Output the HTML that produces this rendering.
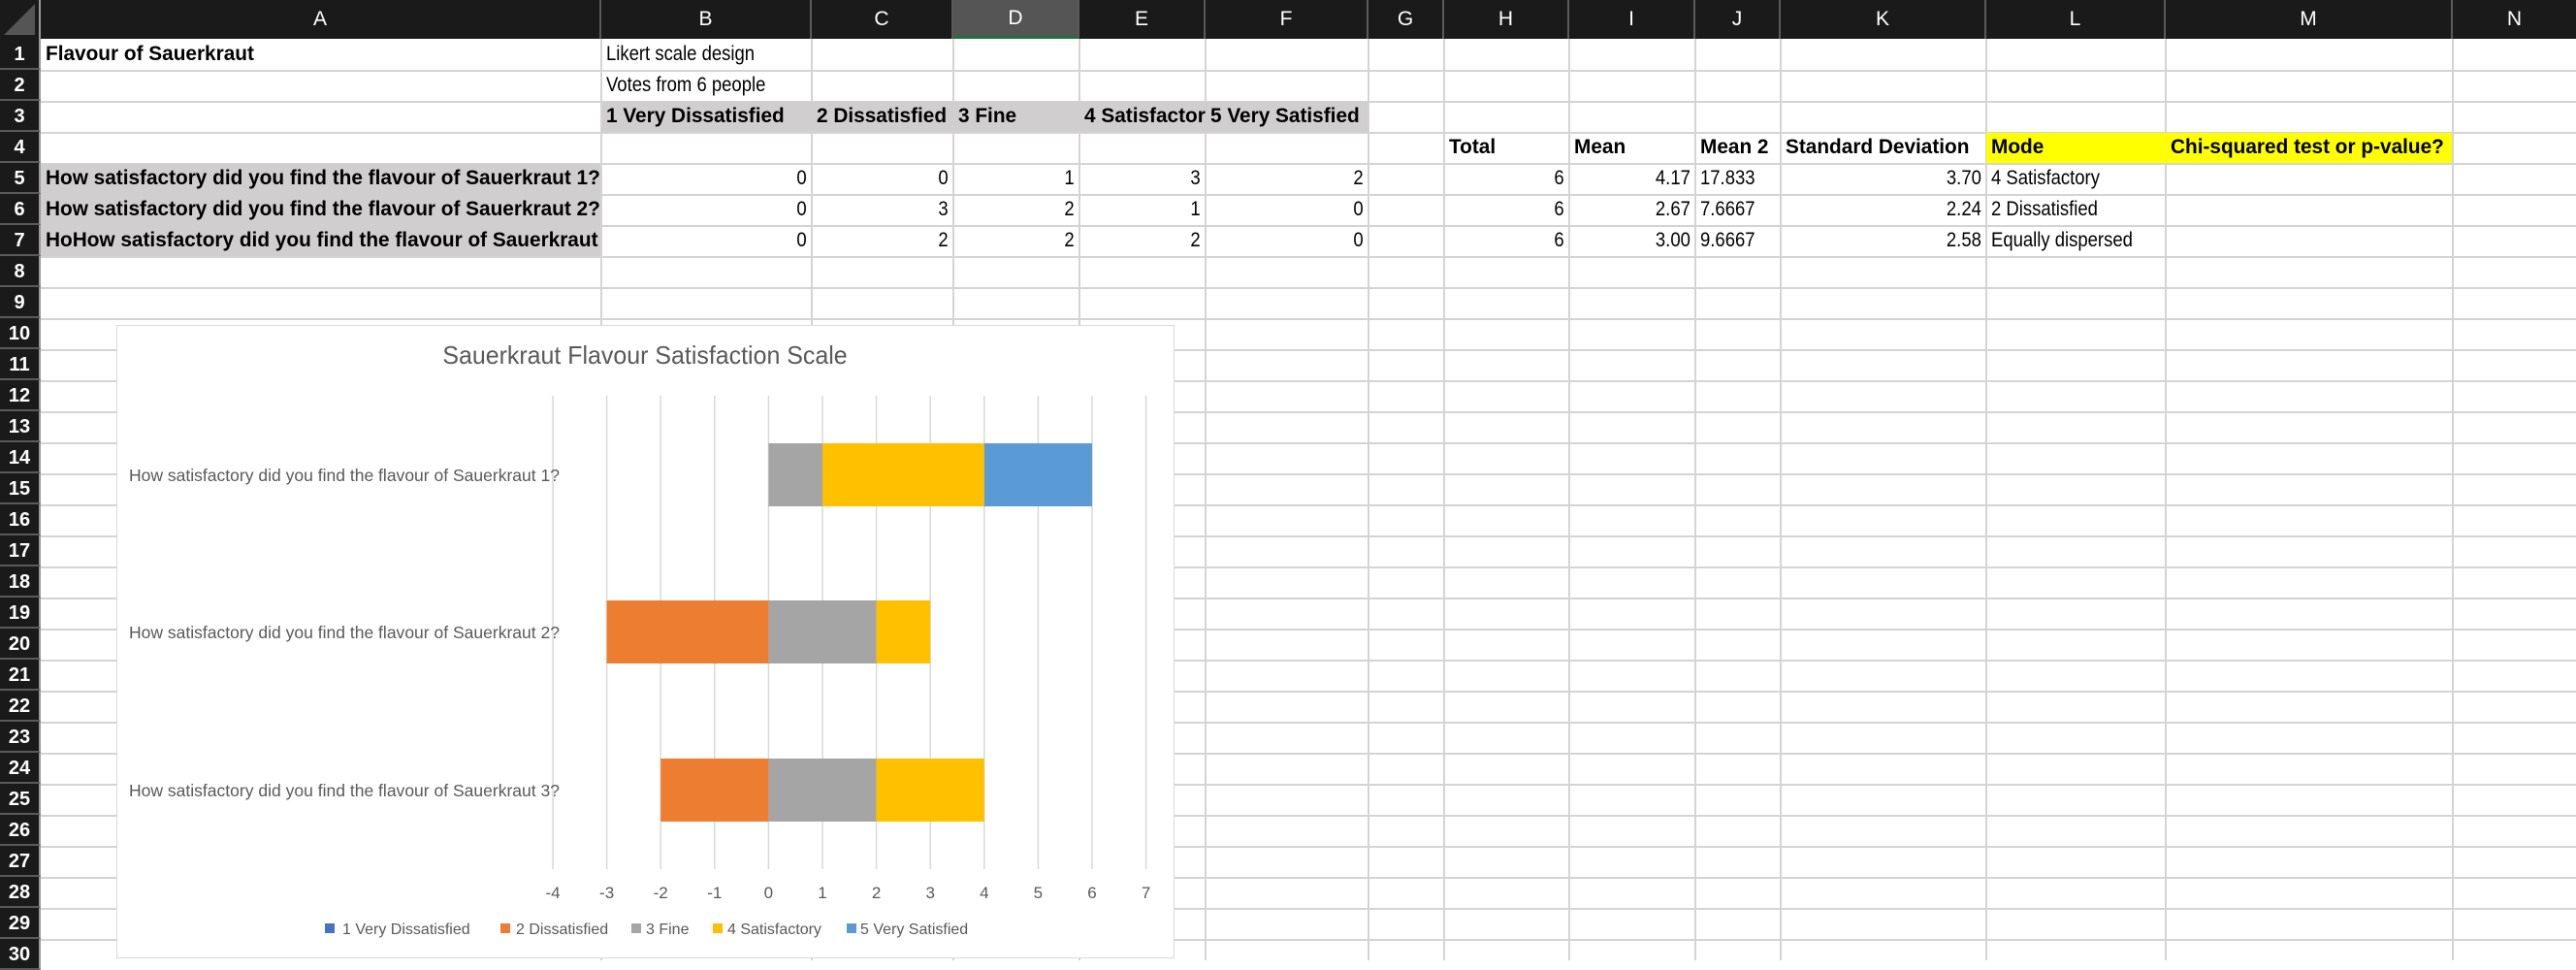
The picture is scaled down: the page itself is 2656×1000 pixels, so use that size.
<!DOCTYPE html>
<html><head><meta charset="utf-8"><style>
*{margin:0;padding:0;box-sizing:border-box}
body{width:2656px;height:990px;overflow:hidden;background:#fff;position:relative;font-family:"Liberation Sans",sans-serif;font-size:21px;color:#000}
.c{position:absolute;height:32px;line-height:32px;white-space:nowrap;overflow:hidden;padding:0 5px}
.c span{display:inline-block;transform:scaleX(.88);transform-origin:left center}
.b span{transform:scaleX(.99)}
.r{text-align:right}
.r span{transform-origin:right center}
.b{font-weight:bold}
.hl{position:absolute;left:0;width:2656px;height:2px;background:#d4d4d4}
.vl{position:absolute;top:40px;height:950px;width:2px;background:#d4d4d4}
.ch{position:absolute;top:0;height:40px;line-height:40px;text-align:center;color:#fff;background:#1a1a1a;border-right:2px solid #5a5a5a;font-size:21px}
.rh{position:absolute;left:0;width:42px;height:32px;line-height:32px;text-align:center;color:#fff;background:#1a1a1a;border-bottom:2px solid #5a5a5a;border-right:2px solid #9a9a9a;font-size:20px;font-weight:bold}
.chart text{font-family:"Liberation Sans",sans-serif;fill:#595959}
</style></head><body>
<div style="position:absolute;left:0;top:0;width:2656px;height:990px">
<div class="hl" style="top:72px"></div><div class="hl" style="top:104px"></div><div class="hl" style="top:136px"></div><div class="hl" style="top:168px"></div><div class="hl" style="top:200px"></div><div class="hl" style="top:232px"></div><div class="hl" style="top:264px"></div><div class="hl" style="top:296px"></div><div class="hl" style="top:328px"></div><div class="hl" style="top:360px"></div><div class="hl" style="top:392px"></div><div class="hl" style="top:424px"></div><div class="hl" style="top:456px"></div><div class="hl" style="top:488px"></div><div class="hl" style="top:520px"></div><div class="hl" style="top:552px"></div><div class="hl" style="top:584px"></div><div class="hl" style="top:616px"></div><div class="hl" style="top:648px"></div><div class="hl" style="top:680px"></div><div class="hl" style="top:712px"></div><div class="hl" style="top:744px"></div><div class="hl" style="top:776px"></div><div class="hl" style="top:808px"></div><div class="hl" style="top:840px"></div><div class="hl" style="top:872px"></div><div class="hl" style="top:904px"></div><div class="hl" style="top:936px"></div><div class="hl" style="top:968px"></div>
<div class="vl" style="left:619px"></div><div class="vl" style="left:836px"></div><div class="vl" style="left:982px"></div><div class="vl" style="left:1112px"></div><div class="vl" style="left:1242px"></div><div class="vl" style="left:1410px"></div><div class="vl" style="left:1488px"></div><div class="vl" style="left:1617px"></div><div class="vl" style="left:1747px"></div><div class="vl" style="left:1835px"></div><div class="vl" style="left:2047px"></div><div class="vl" style="left:2232px"></div><div class="vl" style="left:2528px"></div>
</div>
<div style="position:absolute;left:42px;top:169px;width:577px;height:95px;background:#d0cece"></div>
<div style="position:absolute;left:621px;top:105px;width:789px;height:31px;background:#d0cece"></div>
<div style="position:absolute;left:2048px;top:137px;width:480px;height:31px;background:#ffff00"></div>
<div class="ch" style="left:0;width:42px;border-right:2px solid #9a9a9a"><svg width="40" height="40" style="position:absolute;left:0;top:0"><polygon points="36,4 36,36 4,36" fill="#555"/></svg></div>
<div class="ch" style="left:42px;width:578px">A</div>
<div class="ch" style="left:620px;width:217px">B</div>
<div class="ch" style="left:837px;width:146px">C</div>
<div class="ch" style="left:983px;width:130px;background:#555;border-bottom:3px solid #1e7145;line-height:38px">D</div>
<div class="ch" style="left:1113px;width:130px">E</div>
<div class="ch" style="left:1243px;width:168px">F</div>
<div class="ch" style="left:1411px;width:78px">G</div>
<div class="ch" style="left:1489px;width:129px">H</div>
<div class="ch" style="left:1618px;width:130px">I</div>
<div class="ch" style="left:1748px;width:88px">J</div>
<div class="ch" style="left:1836px;width:212px">K</div>
<div class="ch" style="left:2048px;width:185px">L</div>
<div class="ch" style="left:2233px;width:296px">M</div>
<div class="ch" style="left:2529px;width:127px;border-right:none">N</div>
<div class="rh" style="top:40px">1</div><div class="rh" style="top:72px">2</div><div class="rh" style="top:104px">3</div><div class="rh" style="top:136px">4</div><div class="rh" style="top:168px">5</div><div class="rh" style="top:200px">6</div><div class="rh" style="top:232px">7</div><div class="rh" style="top:264px">8</div><div class="rh" style="top:296px">9</div><div class="rh" style="top:328px">10</div><div class="rh" style="top:360px">11</div><div class="rh" style="top:392px">12</div><div class="rh" style="top:424px">13</div><div class="rh" style="top:456px">14</div><div class="rh" style="top:488px">15</div><div class="rh" style="top:520px">16</div><div class="rh" style="top:552px">17</div><div class="rh" style="top:584px">18</div><div class="rh" style="top:616px">19</div><div class="rh" style="top:648px">20</div><div class="rh" style="top:680px">21</div><div class="rh" style="top:712px">22</div><div class="rh" style="top:744px">23</div><div class="rh" style="top:776px">24</div><div class="rh" style="top:808px">25</div><div class="rh" style="top:840px">26</div><div class="rh" style="top:872px">27</div><div class="rh" style="top:904px">28</div><div class="rh" style="top:936px">29</div><div class="rh" style="top:968px">30</div>

<div class="c b" style="left:42px;top:40px;width:578px"><span>Flavour of Sauerkraut</span></div>
<div class="c" style="left:620px;top:40px;width:300px"><span>Likert scale design</span></div>
<div class="c" style="left:620px;top:72px;width:300px"><span>Votes from 6 people</span></div>
<div class="c b" style="left:620px;top:104px;width:217px"><span>1 Very Dissatisfied</span></div>
<div class="c b" style="left:837px;top:104px;width:146px"><span>2 Dissatisfied</span></div>
<div class="c b" style="left:983px;top:104px;width:130px"><span>3 Fine</span></div>
<div class="c b" style="left:1113px;top:104px;width:130px"><span>4 Satisfactor</span></div>
<div class="c b" style="left:1243px;top:104px;width:168px"><span>5 Very Satisfied</span></div>
<div class="c b" style="left:1489px;top:136px;width:129px"><span>Total</span></div>
<div class="c b" style="left:1618px;top:136px;width:130px"><span>Mean</span></div>
<div class="c b" style="left:1748px;top:136px;width:88px"><span>Mean 2</span></div>
<div class="c b" style="left:1836px;top:136px;width:212px"><span>Standard Deviation</span></div>
<div class="c b" style="left:2048px;top:136px;width:185px"><span>Mode</span></div>
<div class="c b" style="left:2233px;top:136px;width:296px"><span>Chi-squared test or p-value?</span></div>

<div class="c b" style="left:42px;top:168px;width:578px"><span>How satisfactory did you find the flavour of Sauerkraut 1?</span></div>
<div class="c b" style="left:42px;top:200px;width:578px"><span>How satisfactory did you find the flavour of Sauerkraut 2?</span></div>
<div class="c b" style="left:42px;top:232px;width:578px"><span>HoHow satisfactory did you find the flavour of Sauerkraut</span></div>

<div class="c r" style="left:620px;top:168px;width:217px"><span>0</span></div><div class="c r" style="left:837px;top:168px;width:146px"><span>0</span></div><div class="c r" style="left:983px;top:168px;width:130px"><span>1</span></div><div class="c r" style="left:1113px;top:168px;width:130px"><span>3</span></div><div class="c r" style="left:1243px;top:168px;width:168px"><span>2</span></div>
<div class="c r" style="left:1489px;top:168px;width:129px"><span>6</span></div><div class="c r" style="left:1618px;top:168px;width:130px"><span>4.17</span></div><div class="c" style="left:1748px;top:168px;width:88px"><span>17.833</span></div><div class="c r" style="left:1836px;top:168px;width:212px"><span>3.70</span></div><div class="c" style="left:2048px;top:168px;width:185px"><span>4 Satisfactory</span></div>

<div class="c r" style="left:620px;top:200px;width:217px"><span>0</span></div><div class="c r" style="left:837px;top:200px;width:146px"><span>3</span></div><div class="c r" style="left:983px;top:200px;width:130px"><span>2</span></div><div class="c r" style="left:1113px;top:200px;width:130px"><span>1</span></div><div class="c r" style="left:1243px;top:200px;width:168px"><span>0</span></div>
<div class="c r" style="left:1489px;top:200px;width:129px"><span>6</span></div><div class="c r" style="left:1618px;top:200px;width:130px"><span>2.67</span></div><div class="c" style="left:1748px;top:200px;width:88px"><span>7.6667</span></div><div class="c r" style="left:1836px;top:200px;width:212px"><span>2.24</span></div><div class="c" style="left:2048px;top:200px;width:185px"><span>2 Dissatisfied</span></div>

<div class="c r" style="left:620px;top:232px;width:217px"><span>0</span></div><div class="c r" style="left:837px;top:232px;width:146px"><span>2</span></div><div class="c r" style="left:983px;top:232px;width:130px"><span>2</span></div><div class="c r" style="left:1113px;top:232px;width:130px"><span>2</span></div><div class="c r" style="left:1243px;top:232px;width:168px"><span>0</span></div>
<div class="c r" style="left:1489px;top:232px;width:129px"><span>6</span></div><div class="c r" style="left:1618px;top:232px;width:130px"><span>3.00</span></div><div class="c" style="left:1748px;top:232px;width:88px"><span>9.6667</span></div><div class="c r" style="left:1836px;top:232px;width:212px"><span>2.58</span></div><div class="c" style="left:2048px;top:232px;width:200px"><span>Equally dispersed</span></div>

<div class="chart" style="position:absolute;left:120px;top:335px;width:1091px;height:653px;background:#fff;border:1px solid #d9d9d9">
<svg width="1091" height="653" style="position:absolute;left:-1px;top:-1px">
<text x="545" y="40" text-anchor="middle" font-size="26" transform="translate(545 0) scale(.96 1) translate(-545 0)">Sauerkraut Flavour Satisfaction Scale</text>
<g stroke="#d9d9d9" stroke-width="1.5">
<line x1="450" y1="73" x2="450" y2="561"/><line x1="505.6" y1="73" x2="505.6" y2="561"/><line x1="561.2" y1="73" x2="561.2" y2="561"/><line x1="616.8" y1="73" x2="616.8" y2="561"/><line x1="672.4" y1="73" x2="672.4" y2="561"/><line x1="728" y1="73" x2="728" y2="561"/><line x1="783.6" y1="73" x2="783.6" y2="561"/><line x1="839.2" y1="73" x2="839.2" y2="561"/><line x1="894.8" y1="73" x2="894.8" y2="561"/><line x1="950.4" y1="73" x2="950.4" y2="561"/><line x1="1006" y1="73" x2="1006" y2="561"/><line x1="1061.6" y1="73" x2="1061.6" y2="561"/>
</g>
<rect x="672.4" y="122" width="55.6" height="65" fill="#a5a5a5"/>
<rect x="728" y="122" width="166.8" height="65" fill="#ffc000"/>
<rect x="894.8" y="122" width="111.2" height="65" fill="#5b9bd5"/>
<rect x="505.6" y="284" width="166.8" height="65" fill="#ed7d31"/>
<rect x="672.4" y="284" width="111.2" height="65" fill="#a5a5a5"/>
<rect x="783.6" y="284" width="55.6" height="65" fill="#ffc000"/>
<rect x="561.2" y="447" width="111.2" height="65" fill="#ed7d31"/>
<rect x="672.4" y="447" width="111.2" height="65" fill="#a5a5a5"/>
<rect x="783.6" y="447" width="111.2" height="65" fill="#ffc000"/>
<g font-size="17.5">
<text x="13" y="161" textLength="444">How satisfactory did you find the flavour of Sauerkraut 1?</text>
<text x="13" y="323" textLength="444">How satisfactory did you find the flavour of Sauerkraut 2?</text>
<text x="13" y="486" textLength="444">How satisfactory did you find the flavour of Sauerkraut 3?</text>
</g>
<g font-size="17" text-anchor="middle">
<text x="450" y="591">-4</text><text x="505.6" y="591">-3</text><text x="561.2" y="591">-2</text><text x="616.8" y="591">-1</text><text x="672.4" y="591">0</text><text x="728" y="591">1</text><text x="783.6" y="591">2</text><text x="839.2" y="591">3</text><text x="894.8" y="591">4</text><text x="950.4" y="591">5</text><text x="1006" y="591">6</text><text x="1061.6" y="591">7</text>
</g>
<g font-size="16">
<rect x="215" y="617" width="10" height="10" fill="#4472c4"/><text x="233" y="628">1 Very Dissatisfied</text>
<rect x="396" y="617" width="10" height="10" fill="#ed7d31"/><text x="412" y="628">2 Dissatisfied</text>
<rect x="531" y="617" width="10" height="10" fill="#a5a5a5"/><text x="546" y="628">3 Fine</text>
<rect x="615" y="617" width="10" height="10" fill="#ffc000"/><text x="630" y="628">4 Satisfactory</text>
<rect x="753" y="617" width="10" height="10" fill="#5b9bd5"/><text x="767" y="628">5 Very Satisfied</text>
</g>
</svg>
</div>
</body></html>
